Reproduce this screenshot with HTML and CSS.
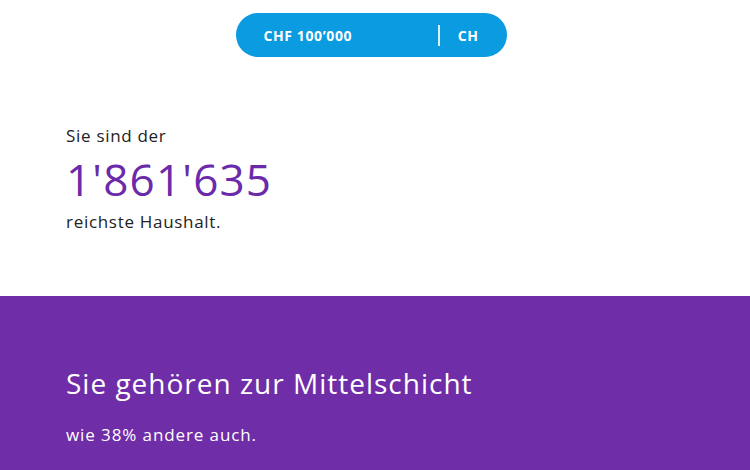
FILE: index.html
```html
<!DOCTYPE html>
<html lang="de">
<head>
  <meta charset="UTF-8" />
  <title>Reichtumsrechner</title>
  <link rel="stylesheet" href="styles.css">
</head>
<body>

  <div class="top">
    <div class="pill">
      <span class="pill-amount">CHF 100’000</span>
      <span class="pill-country">CH</span>
    </div>
  </div>

  <div class="rank">
    <p class="rank-label">Sie sind der</p>
    <p class="rank-number">1'861'635</p>
    <p class="rank-label">reichste Haushalt.</p>
  </div>

  <div class="result">
    <h2>Sie gehören zur Mittelschicht</h2>
    <p>wie 38% andere auch.</p>
  </div>

</body>
</html>
```

FILE: styles.css
```css
* {
  box-sizing: border-box;
}

body {
  font-family: 'Open Sans', sans-serif;
  margin: 0;
  padding: 0;
  background: #fff;
  color: #222;
}

.top {
  display: flex;
  justify-content: center;
  padding-top: 13px;
}

.pill {
  display: flex;
  align-items: center;
  width: 271px;
  height: 44px;
  margin-right: 8px;
  padding: 0 28px;
  background: #0a9be0;
  border-radius: 22px;
  color: #fff;
  font-weight: 700;
  font-size: 14px;
  letter-spacing: 0.6px;
}

.pill-amount {
  flex: 1;
}

.pill-country {
  padding-left: 18px;
  border-left: 2px solid rgba(255, 255, 255, 0.85);
  line-height: 21px;
}

.rank {
  padding: 68px 66px 60px;
  height: 239px;
}

.rank p {
  margin: 0;
}

.rank-label {
  font-size: 17px;
  line-height: 22px;
  letter-spacing: 0.7px;
}

.rank-number {
  font-size: 44px;
  line-height: 60px;
  color: #6a2aa9;
  letter-spacing: 1.2px;
  margin: 2px 0 !important;
}

.result {
  background: #6f2da8;
  color: #fff;
  padding: 69px 66px 40px;
  min-height: 174px;
}

.result h2 {
  margin: 0;
  font-weight: 400;
  font-size: 28px;
  line-height: 36px;
  letter-spacing: 1px;
}

.result p {
  margin: 22px 0 0;
  font-size: 17px;
  letter-spacing: 0.9px;
}
```
